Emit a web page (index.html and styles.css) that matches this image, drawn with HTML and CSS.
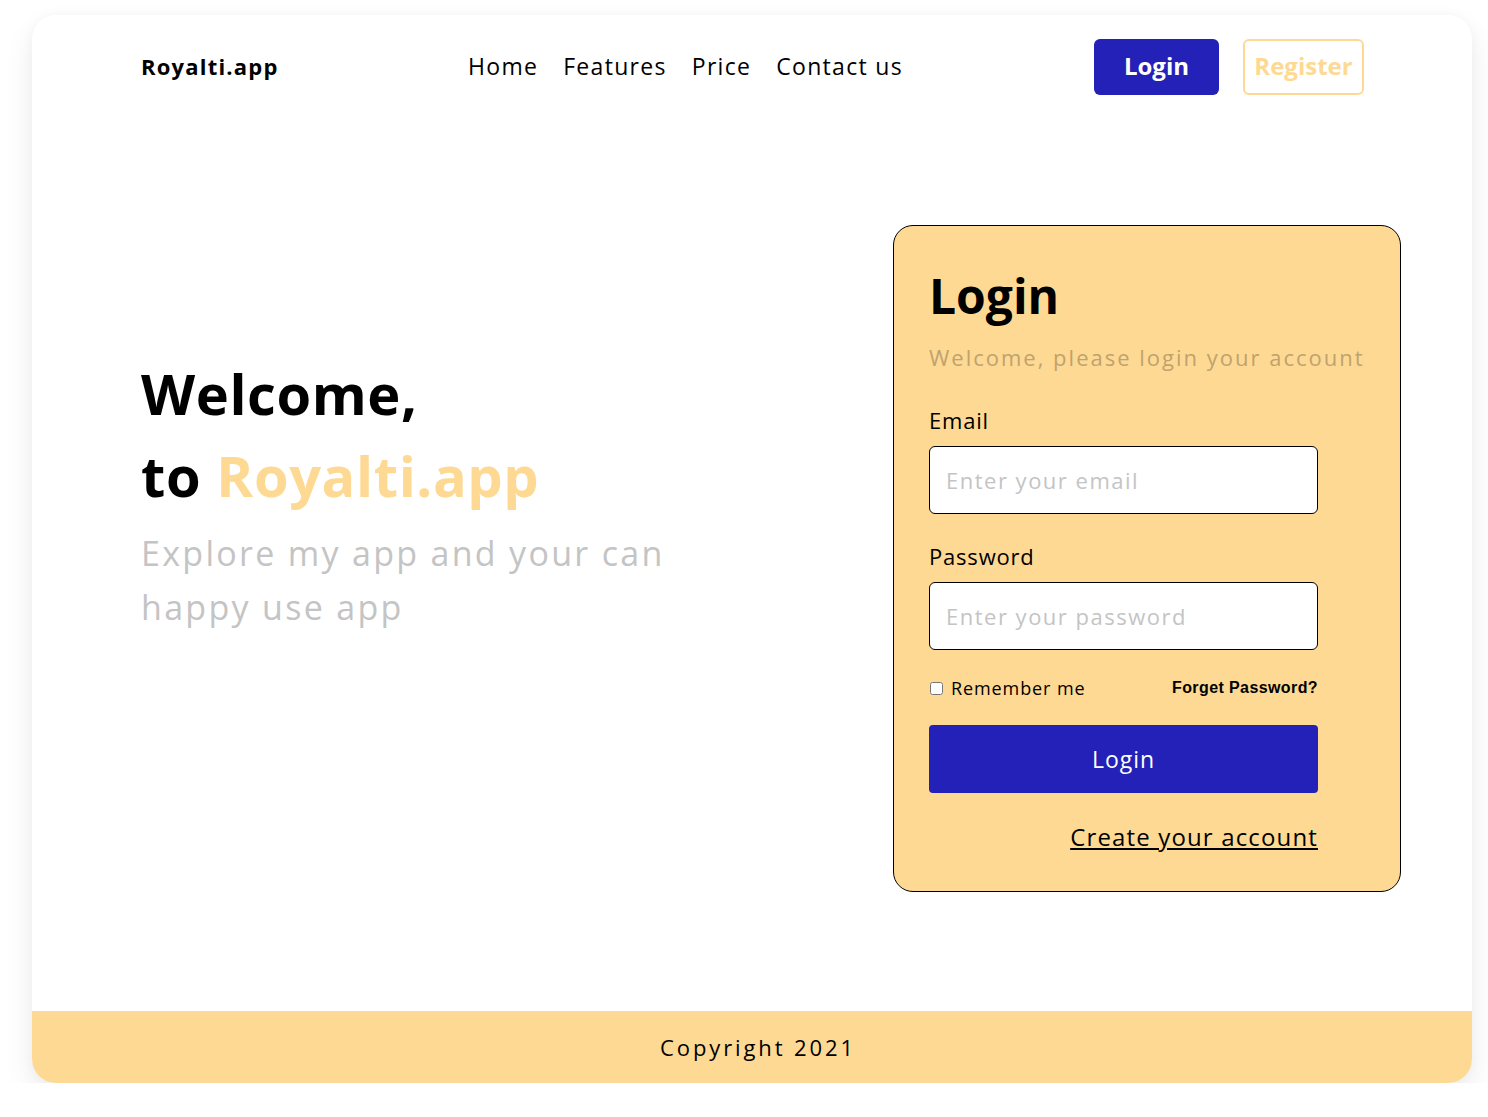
FILE: index.html
```html
<!DOCTYPE html>
<html lang="en">
<head>
<meta charset="utf-8">
<title>Royalti.app</title>
<link rel="stylesheet" href="styles.css">
</head>
<body>
<div class="frame">
  <header class="header">
    <div class="logo">Royalti.app</div>
    <nav class="nav">
      <a href="#">Home</a>
      <a href="#">Features</a>
      <a href="#">Price</a>
      <a href="#">Contact us</a>
    </nav>
    <div class="actions">
      <button class="btn-login">Login</button>
      <button class="btn-register">Register</button>
    </div>
  </header>
  <main class="main">
    <section class="hero">
      <h1 class="hero-title">Welcome,<br>to <span class="accent">Royalti.app</span></h1>
      <p class="hero-sub">Explore my app and your can<br>happy use app</p>
    </section>
    <form class="card">
      <h2 class="card-title">Login</h2>
      <p class="card-sub">Welcome, please login your account</p>
      <label class="label" for="email">Email</label>
      <input class="input" id="email" type="email" placeholder="Enter your email">
      <label class="label" for="password">Password</label>
      <input class="input" id="password" type="password" placeholder="Enter your password">
      <div class="row">
        <label class="remember"><input type="checkbox" class="check"> Remember me</label>
        <a href="#" class="forgot">Forget Password?</a>
      </div>
      <button type="button" class="submit">Login</button>
      <div class="create-row"><a href="#" class="create">Create your account</a></div>
    </form>
  </main>
  <footer class="footer">Copyright 2021</footer>
</div>
</body>
</html>
```

FILE: styles.css
```css
* { box-sizing: border-box; }
html, body { margin: 0; padding: 0; background: #ffffff; }
body {
  font-family: "Open Sans", "DejaVu Sans", sans-serif;
  color: #000;
}
.frame {
  margin: 15px 0 0 32px;
  width: 1440px;
  height: 1068px;
  border-radius: 24px;
  background: #fff;
  box-shadow: 0 14px 30px rgba(0,0,0,0.08), 0 0 12px rgba(0,0,0,0.03);
  display: flex;
  flex-direction: column;
  overflow: hidden;
}
.header {
  display: flex;
  align-items: center;
  padding: 24px 108px 0 109px;
  height: 80px;
}
.logo {
  flex: 0 0 327px;
  font-weight: 700;
  font-size: 22px;
  letter-spacing: 1.2px;
  margin-top: -2px;
}
.nav {
  display: flex;
  gap: 25px;
  margin-top: -2px;
}
.nav a {
  color: #000;
  text-decoration: none;
  font-size: 23px;
  letter-spacing: 1.3px;
}
.actions {
  margin-left: auto;
  display: flex;
  gap: 24px;
}
.btn-login, .btn-register {
  height: 56px;
  border-radius: 6px;
  font-family: inherit;
  font-weight: 700;
  font-size: 24px;
  cursor: pointer;
  padding: 0 0 3px 0;
}
.btn-login {
  width: 125px;
  background: #2321B8;
  color: #fff;
  border: none;
}
.btn-register {
  width: 121px;
  background: #fff;
  color: #FED993;
  border: 2px solid #FED993;
}
.main {
  flex: 1;
  display: flex;
  align-items: flex-start;
  justify-content: space-between;
  padding: 130px 71px 0 109px;
}
.hero { margin-top: 127px; }
.hero-title {
  margin: 0;
  font-size: 56px;
  line-height: 82px;
  font-weight: 700;
  letter-spacing: 0.6px;
}
.accent { color: #FED993; }
.hero-sub {
  margin: 10px 0 0 0;
  font-size: 34px;
  line-height: 54px;
  color: #C4C4C4;
  letter-spacing: 2.3px;
}
.card {
  width: 508px;
  background: #FED993;
  border: 1px solid #000;
  border-radius: 20px;
  padding: 42px 35px 38px 35px;
  display: flex;
  flex-direction: column;
}
.card-title {
  margin: 0;
  font-size: 48px;
  line-height: 56px;
  font-weight: 700;
}
.card-sub {
  margin: 17px 0 0 0;
  font-size: 22px;
  line-height: 32px;
  color: #BEA36E;
  white-space: nowrap;
  letter-spacing: 2px;
}
.label {
  font-size: 22px;
  line-height: 32px;
  margin-top: 31px;
  margin-bottom: 10px;
  letter-spacing: 0.8px;
}
.input + .label { margin-top: 26px; }
.input {
  width: 389px;
  height: 68px;
  border: 1px solid #000;
  border-radius: 6px;
  background: #fff;
  padding: 0 16px;
  font-family: inherit;
  font-size: 22px;
  letter-spacing: 1.5px;
  outline: none;
}
.input::placeholder { color: #C4C4C4; }
.row {
  width: 389px;
  margin-top: 26px;
  display: flex;
  align-items: center;
  justify-content: space-between;
  height: 24px;
}
.remember {
  display: flex;
  align-items: center;
  gap: 8px;
  font-size: 18px;
  letter-spacing: 0.9px;
}
.check {
  width: 13px;
  height: 13px;
  margin: 0 0 0 1px;
}
.forgot {
  font-family: "Liberation Sans", Arial, sans-serif;
  font-weight: 700;
  font-size: 16px;
  letter-spacing: 0.4px;
  color: #000;
  text-decoration: none;
}
.submit {
  width: 389px;
  height: 68px;
  margin-top: 25px;
  background: #2321B8;
  color: #fff;
  border: none;
  border-radius: 4px;
  font-family: inherit;
  font-size: 23px;
  font-weight: 500;
  letter-spacing: 1px;
}
.create-row {
  width: 389px;
  margin-top: 28px;
  display: flex;
  justify-content: flex-end;
}
.create {
  font-size: 24px;
  line-height: 32px;
  color: #000;
  text-decoration: underline;
  letter-spacing: 1.15px;
}
.footer {
  height: 72px;
  background: #FED993;
  display: flex;
  align-items: center;
  justify-content: center;
  padding-left: 12px;
  font-size: 22px;
  letter-spacing: 2.9px;
}
```
